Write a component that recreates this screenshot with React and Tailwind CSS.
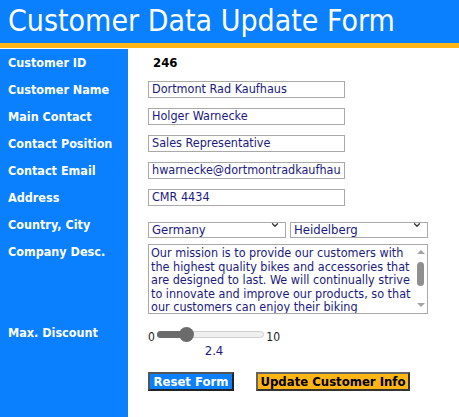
import { ChevronDown } from "lucide-react";

const fields = [
  { label: "Customer Name", value: "Dortmont Rad Kaufhaus" },
  { label: "Main Contact", value: "Holger Warnecke" },
  { label: "Contact Position", value: "Sales Representative" },
  { label: "Contact Email", value: "hwarnecke@dortmontradkaufhaus.de" },
  { label: "Address", value: "CMR 4434" },
];

const desc =
  "Our mission is to provide our customers with the highest quality bikes and accessories that are designed to last. We will continually strive to innovate and improve our products, so that our customers can enjoy their biking experience to the fullest.";

function Label({ children, className = "" }) {
  return (
    <div className={"w-[128px] shrink-0 self-stretch bg-[#0a80ff] pl-2 text-[12.5px] font-bold leading-4 text-white " + className}>
      {children}
    </div>
  );
}

function Select({ value, className = "" }) {
  return (
    <div className={"relative h-4 " + className}>
      <select
        defaultValue={value}
        className="h-4 w-full appearance-none border border-[#a9a9a9] bg-white pl-[3px] text-[13px] leading-[14px] text-[#1a1a80] outline-none"
      >
        <option>{value}</option>
      </select>
      <ChevronDown size={10} strokeWidth={3} className="pointer-events-none absolute right-[6px] top-[3px] text-[#333]" />
    </div>
  );
}

export default function App() {
  const discount = 2.4;
  const pct = discount / 10;

  return (
    <div className="flex min-h-screen flex-col font-['DejaVu_Sans_Condensed','DejaVu_Sans',sans-serif] font-stretch-condensed">
      <div className="h-[43px] bg-[#0a80ff] pl-2 pt-[2px] text-[30px] leading-[38px] text-white">
        Customer Data Update Form
      </div>
      <div className="h-[5px] bg-[#ffb514]" />

      <div className="flex flex-1 flex-col pt-px">
        <div className="flex h-[27px] items-center">
          <Label className="flex items-center">Customer ID</Label>
          <div className="pl-[25px] text-[13px] font-bold text-black">246</div>
        </div>

        {fields.map((f) => (
          <div key={f.label} className="flex h-[27px] items-center">
            <Label className="flex items-center">{f.label}</Label>
            <input
              type="text"
              defaultValue={f.value}
              className="ml-5 h-[17px] w-[197px] border border-[#a9a9a9] px-[3px] text-[12.5px] text-[#1a1a80] outline-none"
            />
          </div>
        ))}

        <div className="flex h-[27px] items-center">
          <Label className="flex items-center">Country, City</Label>
          <div className="ml-5 flex gap-1">
            <Select value="Germany" className="w-[138px]" />
            <Select value="Heidelberg" className="w-[138px]" />
          </div>
        </div>

        <div className="flex items-start">
          <Label className="pt-[6px]">Company Desc.</Label>
          <div className="relative ml-5 mt-[6px]">
            <textarea
              defaultValue={desc}
              className="block h-[70px] w-[280px] resize-none overflow-y-scroll border border-[#a9a9a9] pl-[2px] pr-[12px] pt-[1px] text-[12.5px] leading-[13.5px] text-[#1a1a80] outline-none [scrollbar-width:none]"
            />
            {/* fake scrollbar */}
            <div className="pointer-events-none absolute bottom-px right-px top-px flex w-[13px] flex-col items-center bg-white">
              <div className="mt-[5px] h-0 w-0 border-x-[4px] border-b-[4px] border-x-transparent border-b-[#a3a3a3]" />
              <div className="mt-[8px] h-[24px] w-[7px] rounded-full bg-[#8f8f8f]" />
              <div className="mt-auto mb-[6px] h-0 w-0 border-x-[4px] border-t-[4px] border-x-transparent border-t-[#a3a3a3]" />
            </div>
          </div>
        </div>

        <div className="flex flex-1 items-start">
          <Label className="pt-[11px]">Max. Discount</Label>
          <div className="flex flex-col pl-5 pt-[13px]">
            <div className="flex h-[15px] w-[132px] items-center text-[12px] leading-none text-[#222]">
              <span className="mt-[5px] w-[9px]">0</span>
              <div className="relative h-[15px] w-[108px]">
                <div className="absolute left-0 right-0 top-[4px] h-[7px] rounded-full border border-[#cfcfcf] bg-[#efefef]" />
                <div
                  className="absolute left-0 top-[4px] h-[7px] rounded-full bg-[#6b6b6b]"
                  style={{ width: `${7 + pct * 94}px` }}
                />
                <div
                  className="absolute top-0 h-[15px] w-[15px] rounded-full bg-[#6b6b6b]"
                  style={{ left: `${pct * 94}px` }}
                />
              </div>
              <span className="mt-[5px] pl-[2px]">10</span>
            </div>
            <div className="w-[132px] pt-[1px] text-center text-[13px] leading-4 text-[#1a1a80]">{discount}</div>
            <div className="mt-[13px] flex gap-[22px]">
              <button className="h-[19px] w-[86px] border-2 border-[#222] border-t-[#555] border-l-[#555] bg-[#0a80ff] text-[13px] font-bold leading-none text-white">
                Reset Form
              </button>
              <button className="h-[19px] w-[154px] border-2 border-[#333] border-t-[#666] border-l-[#666] bg-[#ffb514] text-[13px] font-bold leading-none text-black">
                Update Customer Info
              </button>
            </div>
          </div>
        </div>
      </div>
    </div>
  );
}
